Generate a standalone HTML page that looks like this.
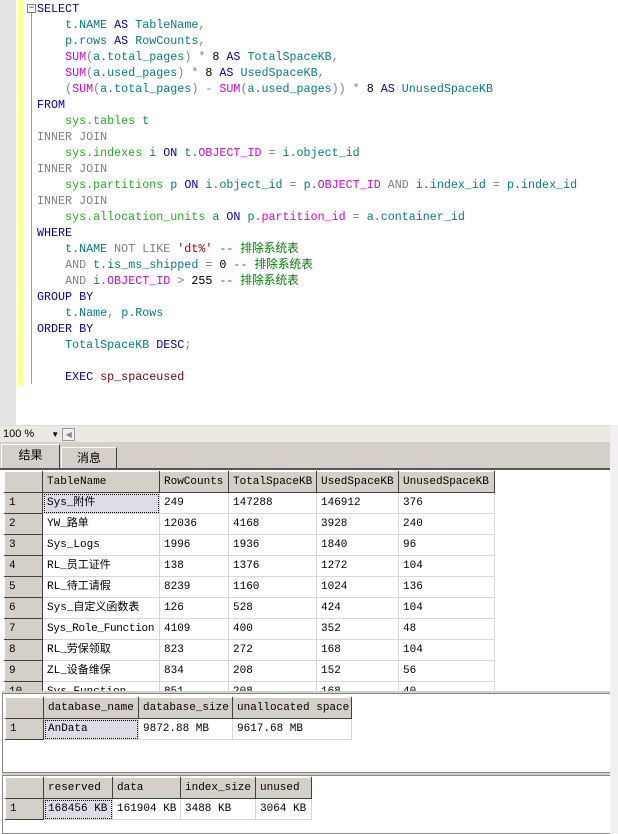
<!DOCTYPE html>
<html><head><meta charset="utf-8"><style>
*{margin:0;padding:0;box-sizing:border-box}
body{width:618px;height:834px;overflow:hidden;background:#fff;position:relative;font-family:"Liberation Mono","Noto Sans CJK SC",monospace}
#gut{position:absolute;left:0;top:0;width:16px;height:425px;background:#e4e4e4}
#yb{position:absolute;left:18px;top:0;width:5px;height:385px;background:#ffff90}
#fold{position:absolute;left:31px;top:12px;width:1px;height:372px;background:#a0a0a0}
#box{position:absolute;left:27px;top:4px;width:9px;height:9px;border:1px solid #808080;background:#fff;font-size:9px;line-height:7px;text-align:center;color:#000}
.l{position:absolute;left:37px;font-size:11.7px;line-height:16px;white-space:pre;color:#000}
.k{color:#0000c0}.t{color:#008080}.f{color:#e000e0}.g{color:#808080}.s{color:#20b020}.c{color:#008000}.r{color:#b00000}.m{color:#800000}
#zb{position:absolute;left:0;top:425px;width:610px;height:17px;background:#ece9e4;border-top:1px solid #ddd;font-family:"Liberation Sans",sans-serif;font-size:11px;line-height:16px;padding-left:3px}
#tabs{position:absolute;left:0;top:442px;width:610px;height:28px;background:#d4d0c8;border-bottom:2px solid #555}
.tab{position:absolute;top:5px;height:21px;border:1px solid #fff;border-right:1px solid #404040;border-bottom:none;font-family:"Liberation Sans","Noto Sans CJK SC",sans-serif;font-size:12px;text-align:center;line-height:20px}
#rs{position:absolute;left:610px;top:425px;width:8px;height:409px;background:#f0f0f0}
table{position:absolute;border-collapse:collapse;font-size:11px;table-layout:fixed}
td{height:21px;border:1px solid #d8d8d8;padding-left:4px;white-space:nowrap;overflow:hidden;background:#fff;line-height:19px}
th{height:21px;background:#d4d0c8;border:1px solid #fff;border-right:1px solid #404040;border-bottom:1px solid #404040;font-weight:normal;text-align:left;padding-left:4px;white-space:nowrap;overflow:hidden}
td.n{background:#d4d0c8;border:1px solid #fff;border-right:1px solid #404040;border-bottom:1px solid #404040}
td.sel{background:#dcdce4;outline:1px dotted #000;outline-offset:-2px}
.pan{position:absolute;left:2px;width:608px;border:1px solid #888;border-right:none;background:#fff}
</style></head><body>
<div id="gut"></div><div id="yb"></div><div id="fold"></div><div id="box">−</div>
<div class="l" style="top:1px"><span class="k">SELECT</span></div>
<div class="l" style="top:17px">    <span class="t">t.NAME</span> <span class="k">AS</span> <span class="t">TableName</span><span class="g">,</span></div>
<div class="l" style="top:33px">    <span class="t">p.rows</span> <span class="k">AS</span> <span class="t">RowCounts</span><span class="g">,</span></div>
<div class="l" style="top:49px">    <span class="f">SUM</span><span class="g">(</span><span class="t">a.total_pages</span><span class="g">)</span> <span class="g">*</span> 8 <span class="k">AS</span> <span class="t">TotalSpaceKB</span><span class="g">,</span></div>
<div class="l" style="top:65px">    <span class="f">SUM</span><span class="g">(</span><span class="t">a.used_pages</span><span class="g">)</span> <span class="g">*</span> 8 <span class="k">AS</span> <span class="t">UsedSpaceKB</span><span class="g">,</span></div>
<div class="l" style="top:81px">    <span class="g">(</span><span class="f">SUM</span><span class="g">(</span><span class="t">a.total_pages</span><span class="g">)</span> <span class="g">-</span> <span class="f">SUM</span><span class="g">(</span><span class="t">a.used_pages</span><span class="g">))</span> <span class="g">*</span> 8 <span class="k">AS</span> <span class="t">UnusedSpaceKB</span></div>
<div class="l" style="top:97px"><span class="k">FROM</span></div>
<div class="l" style="top:113px">    <span class="s">sys.tables</span> <span class="t">t</span></div>
<div class="l" style="top:129px"><span class="g">INNER JOIN</span></div>
<div class="l" style="top:145px">    <span class="s">sys.indexes</span> <span class="t">i</span> <span class="k">ON</span> <span class="t">t.</span><span class="f">OBJECT_ID</span> <span class="g">=</span> <span class="t">i.object_id</span></div>
<div class="l" style="top:161px"><span class="g">INNER JOIN</span></div>
<div class="l" style="top:177px">    <span class="s">sys.partitions</span> <span class="t">p</span> <span class="k">ON</span> <span class="t">i.object_id</span> <span class="g">=</span> <span class="t">p.</span><span class="f">OBJECT_ID</span> <span class="g">AND</span> <span class="t">i.index_id</span> <span class="g">=</span> <span class="t">p.index_id</span></div>
<div class="l" style="top:193px"><span class="g">INNER JOIN</span></div>
<div class="l" style="top:209px">    <span class="s">sys.allocation_units</span> <span class="t">a</span> <span class="k">ON</span> <span class="t">p.</span><span class="f">partition_id</span> <span class="g">=</span> <span class="t">a.container_id</span></div>
<div class="l" style="top:225px"><span class="k">WHERE</span></div>
<div class="l" style="top:241px">    <span class="t">t.NAME</span> <span class="g">NOT LIKE</span> <span class="r">'dt%'</span> <span class="c">-- 排除系统表</span></div>
<div class="l" style="top:257px">    <span class="g">AND</span> <span class="t">t.is_ms_shipped</span> <span class="g">=</span> 0 <span class="c">-- 排除系统表</span></div>
<div class="l" style="top:273px">    <span class="g">AND</span> <span class="t">i.</span><span class="f">OBJECT_ID</span> <span class="g">&gt;</span> 255 <span class="c">-- 排除系统表</span></div>
<div class="l" style="top:289px"><span class="k">GROUP BY</span></div>
<div class="l" style="top:305px">    <span class="t">t.Name</span><span class="g">,</span> <span class="t">p.Rows</span></div>
<div class="l" style="top:321px"><span class="k">ORDER BY</span></div>
<div class="l" style="top:337px">    <span class="t">TotalSpaceKB</span> <span class="k">DESC</span><span class="g">;</span></div>
<div class="l" style="top:369px">    <span class="k">EXEC</span> <span class="m">sp_spaceused</span></div>

<div id="zb">100 % <span style="font-size:8px;margin-left:14px">▼</span><span style="display:inline-block;width:13px;height:13px;border:1px solid #999;background:#eee;vertical-align:middle;margin-left:3px;font-size:8px;line-height:11px;text-align:center;color:#888">◀</span></div>
<div id="tabs">
<div class="tab" style="left:1px;width:59px;background:#d4d0c8;top:2px;height:24px">结果</div>
<div class="tab" style="left:61px;width:56px">消息</div>
</div>
<div id="rs"></div>

<div class="pan" style="top:470px;height:221px;overflow:hidden;border:none">
<table style="left:2px;top:1px;width:490px">
<colgroup><col style="width:38px"><col style="width:117px"><col style="width:69px"><col style="width:88px"><col style="width:82px"><col style="width:96px"></colgroup>
<tr><th></th><th>TableName</th><th>RowCounts</th><th>TotalSpaceKB</th><th>UsedSpaceKB</th><th>UnusedSpaceKB</th></tr>
<tr><td class="n">1</td><td class="sel">Sys_附件</td><td>249</td><td>147288</td><td>146912</td><td>376</td></tr>
<tr><td class="n">2</td><td>YW_路单</td><td>12036</td><td>4168</td><td>3928</td><td>240</td></tr>
<tr><td class="n">3</td><td>Sys_Logs</td><td>1996</td><td>1936</td><td>1840</td><td>96</td></tr>
<tr><td class="n">4</td><td>RL_员工证件</td><td>138</td><td>1376</td><td>1272</td><td>104</td></tr>
<tr><td class="n">5</td><td>RL_待工请假</td><td>8239</td><td>1160</td><td>1024</td><td>136</td></tr>
<tr><td class="n">6</td><td>Sys_自定义函数表</td><td>126</td><td>528</td><td>424</td><td>104</td></tr>
<tr><td class="n">7</td><td style="letter-spacing:-0.3px">Sys_Role_Function</td><td>4109</td><td>400</td><td>352</td><td>48</td></tr>
<tr><td class="n">8</td><td>RL_劳保领取</td><td>823</td><td>272</td><td>168</td><td>104</td></tr>
<tr><td class="n">9</td><td>ZL_设备维保</td><td>834</td><td>208</td><td>152</td><td>56</td></tr>
<tr><td class="n">10</td><td>Sys_Function</td><td>851</td><td>208</td><td>168</td><td>40</td></tr>
</table></div>
<div style="position:absolute;left:2px;top:691px;width:608px;height:2px;background:#d4d0c8"></div>
<div class="pan" style="top:693px;height:80px">
<table style="left:2px;top:3px;width:346px">
<colgroup><col style="width:38px"><col style="width:95px"><col style="width:94px"><col style="width:119px"></colgroup>
<tr><th></th><th>database_name</th><th>database_size</th><th>unallocated space</th></tr>
<tr><td class="n">1</td><td class="sel">AnData</td><td>9872.88 MB</td><td>9617.68 MB</td></tr>
</table></div>
<div style="position:absolute;left:2px;top:773px;width:608px;height:2px;background:#d4d0c8"></div>
<div class="pan" style="top:775px;height:59px">
<table style="left:2px;top:1px;width:306px">
<colgroup><col style="width:38px"><col style="width:69px"><col style="width:68px"><col style="width:75px"><col style="width:56px"></colgroup>
<tr><th></th><th>reserved</th><th>data</th><th>index_size</th><th>unused</th></tr>
<tr><td class="n">1</td><td class="sel">168456 KB</td><td>161904 KB</td><td>3488 KB</td><td>3064 KB</td></tr>
</table></div>
</body></html>
